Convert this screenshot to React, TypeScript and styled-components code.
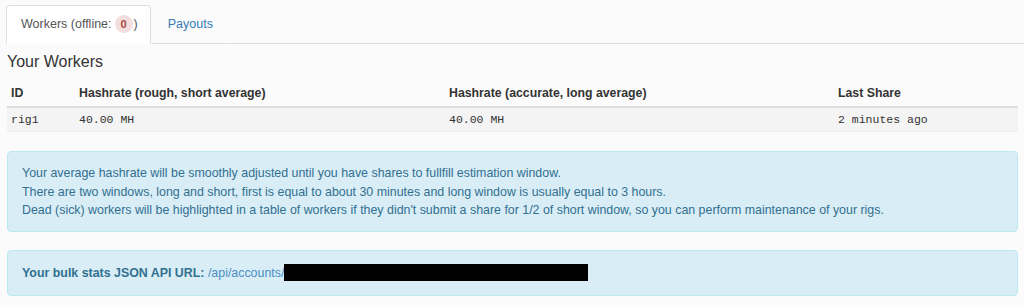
import { FC } from 'react'
import styled, { createGlobalStyle } from 'styled-components'

const GlobalStyle = createGlobalStyle`
  html, body {
    margin: 0;
    padding: 0;
    background: #fbfbfb;
    font-family: "Liberation Sans", Arial, sans-serif;
    font-size: 12px;
    color: #333;
  }
`

const workers = [
  { id: 'rig1', rough: '40.00 MH', accurate: '40.00 MH', lastShare: '2 minutes ago' }
]

const App: FC = () => {
  return (
    <>
      <GlobalStyle />
      <Page>
        <Tabs>
          <Tab active>
            Workers (offline: <Badge>0</Badge> )
          </Tab>
          <Tab>Payouts</Tab>
          <TabRest />
        </Tabs>
        <Content>
          <Title>Your Workers</Title>
          <Table>
            <colgroup>
              <col style={{ width: 68 }} />
              <col style={{ width: 370 }} />
              <col style={{ width: 389 }} />
              <col />
            </colgroup>
            <thead>
              <tr>
                <Th>ID</Th>
                <Th>Hashrate (rough, short average)</Th>
                <Th>Hashrate (accurate, long average)</Th>
                <Th>Last Share</Th>
              </tr>
            </thead>
            <tbody>
              {workers.map((w) => (
                <Row key={w.id}>
                  <Td>{w.id}</Td>
                  <Td>{w.rough}</Td>
                  <Td>{w.accurate}</Td>
                  <Td>{w.lastShare}</Td>
                </Row>
              ))}
            </tbody>
          </Table>
          <Alert>
            Your average hashrate will be smoothly adjusted until you have shares to fullfill estimation window.
            <br />
            There are two windows, long and short, first is equal to about 30 minutes and long window is usually equal to 3 hours.
            <br />
            Dead (sick) workers will be highlighted in a table of workers if they didn't submit a share for 1/2 of short window, so you can perform maintenance of your rigs.
          </Alert>
          <ApiAlert>
            <strong>Your bulk stats JSON API URL:</strong> <ApiLink>/api/accounts/</ApiLink>
            <Redacted />
          </ApiAlert>
        </Content>
      </Page>
    </>
  )
}

const Page = styled.div`
  padding-top: 5px;
`

const Tabs = styled.div`
  display: flex;
  align-items: flex-end;
  padding-left: 6px;
  height: 39px;
`

const Tab = styled.div<{ active?: boolean }>`
  box-sizing: border-box;
  height: 39px;
  display: flex;
  align-items: center;
  padding: 0 12px 2px 14px;
  font-size: 12.5px;
  color: ${({ active }) => (active ? '#555' : '#337ab7')};
  background: ${({ active }) => (active ? '#fff' : 'transparent')};
  border: 1px solid ${({ active }) => (active ? '#ddd' : 'transparent')};
  border-bottom: 1px solid ${({ active }) => (active ? '#fff' : '#ddd')};
  border-radius: 4px 4px 0 0;
  padding-left: ${({ active }) => (active ? '14px' : '16px')};
`

const TabRest = styled.div`
  flex: 1;
  border-bottom: 1px solid #ddd;
`

const Badge = styled.span`
  display: inline-flex;
  align-items: center;
  justify-content: center;
  min-width: 18px;
  height: 18px;
  margin: 0 1px 0 3px;
  border-radius: 9px;
  background: #f2dede;
  color: #a94442;
  font-size: 11px;
  font-weight: bold;
`

const Content = styled.div`
  padding: 0 6px 0 7px;
`

const Title = styled.h3`
  margin: 9px 0 10px;
  font-size: 16px;
  font-weight: normal;
  color: #333;
`

const Table = styled.table`
  width: 100%;
  border-collapse: collapse;
  table-layout: fixed;
  margin-bottom: 19px;
`

const Th = styled.th`
  text-align: left;
  font-size: 12.3px;
  font-weight: bold;
  padding: 5px 4px 6px;
  border-bottom: 2px solid #ddd;
`

const Row = styled.tr`
  background: #f4f4f4;
`

const Td = styled.td`
  font-family: "Liberation Mono", "DejaVu Sans Mono", monospace;
  font-size: 11.5px;
  color: #333;
  padding: 5px 4px 5px;
  border-bottom: 1px solid #eee;
`

const Alert = styled.div`
  background: #d9edf7;
  border: 1px solid #bce8f1;
  border-radius: 4px;
  color: #31708f;
  font-size: 12.4px;
  line-height: 18.5px;
  padding: 12px 14px 11px;
  margin-bottom: 18px;
`

const ApiAlert = styled(Alert)`
  padding: 13px 14px 13px;

  strong {
    font-weight: bold;
  }
`

const ApiLink = styled.span`
  color: #4a8ec2;
`

const Redacted = styled.span`
  display: inline-block;
  width: 304px;
  height: 17px;
  vertical-align: -4px;
  background: #000;
`

export default App
